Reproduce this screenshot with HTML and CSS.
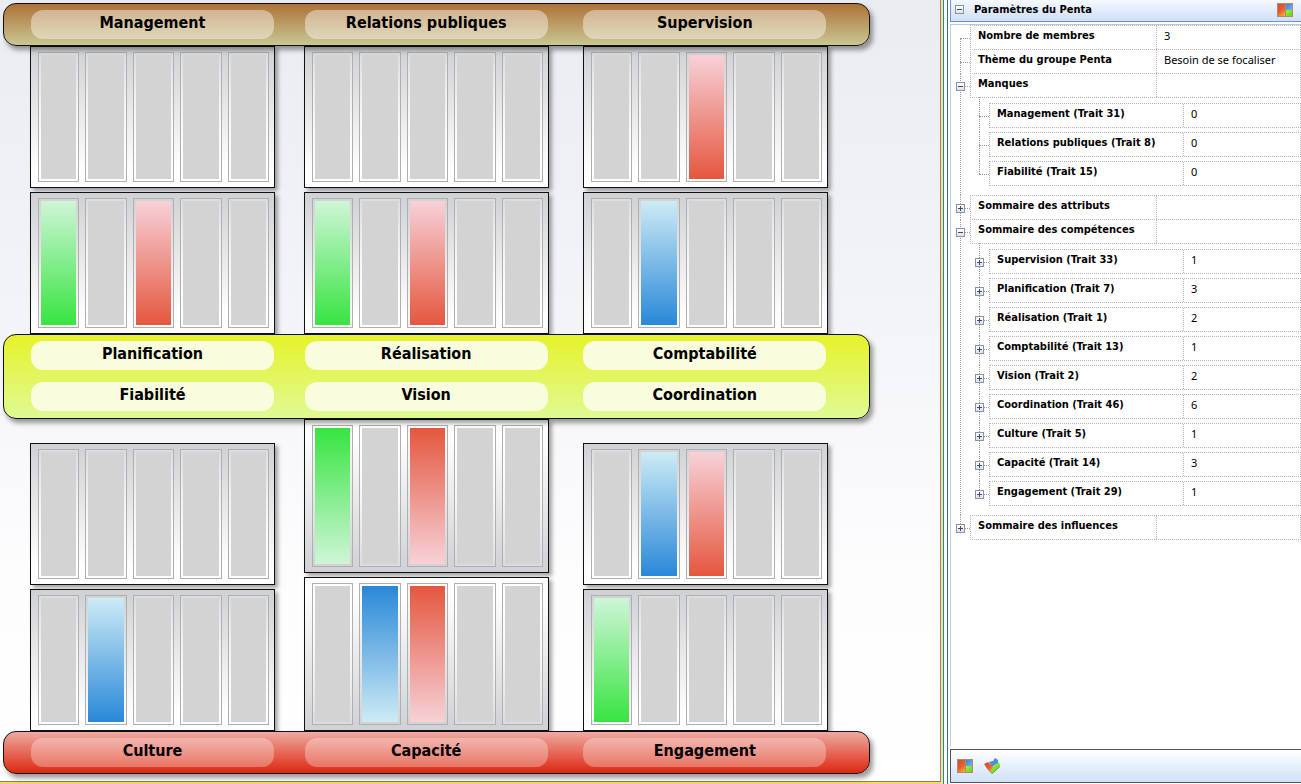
FILE: index.html
```html
<!DOCTYPE html>
<html lang="fr">

<head>
  <meta charset="UTF-8">
  <meta name="viewport" content="width=device-width, initial-scale=1.0">
  <title>Penta</title>
  <link rel="stylesheet" href="styles.css">
</head>

<body>
  <svg class="symbols" aria-hidden="true">
    <defs>
      <linearGradient id="red" x1="0" y1="0" x2="1" y2="1"><stop offset="0" stop-color="#c9502c"/><stop offset="1" stop-color="#f4603a"/></linearGradient>
      <linearGradient id="blue" x1="0" y1="0" x2="1" y2="1"><stop offset="0" stop-color="#3f7fd0"/><stop offset="1" stop-color="#6fb8f5"/></linearGradient>
      <linearGradient id="amber" x1="0" y1="0" x2="1" y2="1"><stop offset="0" stop-color="#e0401c"/><stop offset="1" stop-color="#ffb23c"/></linearGradient>
      <linearGradient id="green" x1="0" y1="0" x2="1" y2="1"><stop offset="0" stop-color="#a8f03c"/><stop offset="1" stop-color="#5cd414"/></linearGradient>
    </defs>
    <symbol id="tiles" viewBox="0 0 16 14">
      <rect width="16" height="14" fill="#b08a74"/>
      <rect x="1" y="1" width="7" height="6" fill="url(#red)"/>
      <rect x="9" y="1" width="6" height="6" fill="url(#blue)"/>
      <rect x="1" y="7" width="7" height="6" fill="url(#amber)"/>
      <rect x="9" y="7" width="6" height="6" fill="url(#green)"/>
    </symbol>
    <symbol id="tiles-tilted" viewBox="0 0 16 16">
      <path d="M0 6l4-2 4 4-4 4z" fill="url(#red)"/>
      <path d="M5 4l4-1 2-3 3 2v3l-6 4z" fill="#4f8fd8"/>
      <path d="M3 10l5-3 2 3-2 5z" fill="url(#amber)"/>
      <path d="M8 10l7-6 1 4-7 7-2-1z" fill="url(#green)"/>
      <path d="M4 11l4 4 8-7v1l-8 7-4-4z" fill="#5f9a3c"/>
    </symbol>
  </svg>

  <main class="chart">
    <div class="board">
      <div class="band brown">
        <h2 class="label">Management</h2>
        <h2 class="label">Relations publiques</h2>
        <h2 class="label">Supervision</h2>
      </div>

      <div class="columns">
        <div class="stack">
          <div class="panel"><i></i><i></i><i></i><i></i><i></i></div>
          <div class="panel"><i class="green"></i><i></i><i class="red"></i><i></i><i></i></div>
        </div>
        <div class="stack">
          <div class="panel"><i></i><i></i><i></i><i></i><i></i></div>
          <div class="panel"><i class="green"></i><i></i><i class="red"></i><i></i><i></i></div>
        </div>
        <div class="stack">
          <div class="panel"><i></i><i></i><i class="red"></i><i></i><i></i></div>
          <div class="panel"><i></i><i class="blue"></i><i></i><i></i><i></i></div>
        </div>
      </div>

      <div class="band yellow">
        <h2 class="label">Planification</h2>
        <h2 class="label">Réalisation</h2>
        <h2 class="label">Comptabilité</h2>
        <h2 class="label">Fiabilité</h2>
        <h2 class="label">Vision</h2>
        <h2 class="label">Coordination</h2>
      </div>

      <div class="columns">
        <div class="stack">
          <div class="panel"><i></i><i></i><i></i><i></i><i></i></div>
          <div class="panel"><i></i><i class="blue"></i><i></i><i></i><i></i></div>
        </div>
        <div class="stack flipped">
          <div class="panel"><i class="green"></i><i></i><i class="red"></i><i></i><i></i></div>
          <div class="panel"><i></i><i class="blue"></i><i class="red"></i><i></i><i></i></div>
        </div>
        <div class="stack">
          <div class="panel"><i></i><i class="blue"></i><i class="red"></i><i></i><i></i></div>
          <div class="panel"><i class="green"></i><i></i><i></i><i></i><i></i></div>
        </div>
      </div>

      <div class="band crimson">
        <h2 class="label">Culture</h2>
        <h2 class="label">Capacité</h2>
        <h2 class="label">Engagement</h2>
      </div>
    </div>
  </main>

  <div class="splitter"></div>

  <aside class="sidebar">
    <header class="sidebar-header">
      <button class="toggle open" aria-label="Réduire"></button>
      <h1>Paramètres du Penta</h1>
      <svg class="icon" width="16" height="14"><use href="#tiles"/></svg>
    </header>

    <div class="sidebar-body">
      <ul class="tree">
        <li><div class="row"><b>Nombre de membres</b><span>3</span></div></li>
        <li><div class="row"><b>Thème du groupe Penta</b><span>Besoin de se focaliser</span></div></li>
        <li>
          <button class="toggle open" aria-label="Réduire"></button>
          <div class="row"><b>Manques</b><span></span></div>
          <ul class="tree nested">
            <li><div class="row"><b>Management (Trait 31)</b><span>0</span></div></li>
            <li><div class="row"><b>Relations publiques (Trait 8)</b><span>0</span></div></li>
            <li><div class="row"><b>Fiabilité (Trait 15)</b><span>0</span></div></li>
          </ul>
        </li>
        <li><button class="toggle" aria-label="Développer"></button><div class="row"><b>Sommaire des attributs</b><span></span></div></li>
        <li>
          <button class="toggle open" aria-label="Réduire"></button>
          <div class="row"><b>Sommaire des compétences</b><span></span></div>
          <ul class="tree nested">
            <li><button class="toggle" aria-label="Développer"></button><div class="row"><b>Supervision (Trait 33)</b><span>1</span></div></li>
            <li><button class="toggle" aria-label="Développer"></button><div class="row"><b>Planification (Trait 7)</b><span>3</span></div></li>
            <li><button class="toggle" aria-label="Développer"></button><div class="row"><b>Réalisation (Trait 1)</b><span>2</span></div></li>
            <li><button class="toggle" aria-label="Développer"></button><div class="row"><b>Comptabilité (Trait 13)</b><span>1</span></div></li>
            <li><button class="toggle" aria-label="Développer"></button><div class="row"><b>Vision (Trait 2)</b><span>2</span></div></li>
            <li><button class="toggle" aria-label="Développer"></button><div class="row"><b>Coordination (Trait 46)</b><span>6</span></div></li>
            <li><button class="toggle" aria-label="Développer"></button><div class="row"><b>Culture (Trait 5)</b><span>1</span></div></li>
            <li><button class="toggle" aria-label="Développer"></button><div class="row"><b>Capacité (Trait 14)</b><span>3</span></div></li>
            <li><button class="toggle" aria-label="Développer"></button><div class="row"><b>Engagement (Trait 29)</b><span>1</span></div></li>
          </ul>
        </li>
        <li><button class="toggle" aria-label="Développer"></button><div class="row"><b>Sommaire des influences</b><span></span></div></li>
      </ul>
    </div>

    <footer class="sidebar-footer">
      <button class="tool" aria-label="Vue à plat"><svg width="16" height="14"><use href="#tiles"/></svg></button>
      <button class="tool" aria-label="Vue inclinée"><svg width="16" height="16"><use href="#tiles-tilted"/></svg></button>
    </footer>
  </aside>
</body>

</html>
```
FILE: styles.css
```css
* {
  box-sizing: border-box;
}

body {
  display: flex;
  height: 100vh;
  margin: 0;
  overflow: hidden;
  font-family: "Noto Sans", "DejaVu Sans", sans-serif;
  font-size: 11px;
  color: #000;
  background: #fff;
}

h1,
h2,
ul {
  margin: 0;
  padding: 0;
}

.symbols {
  position: absolute;
  width: 0;
  height: 0;
}

/* chart */
.chart {
  flex: 1;
  padding: 3px;
  border-right: 1px solid #a08a3c;
  border-bottom: 1px solid #8a8450;
  box-shadow: 0 2px #f6d468;
  margin-bottom: 2px;
  background: linear-gradient(#ebecf1, #f3f4f8 40%, #fdfdfe 75%, #fff);
}

.board {
  max-width: 867px;
}

.band,
.columns {
  display: grid;
  grid-template-columns: 274fr 279fr 245fr;
}

.band {
  position: relative;
  row-gap: 12px;
  padding: 6px 41px 6px 27px;
  border: 1px solid #111;
  border-radius: 13px;
  box-shadow: 3px 4px 5px rgba(0, 0, 0, 0.4);
}

.columns {
  align-items: end;
  padding: 0 42px 0 27px;
}

.brown {
  background: linear-gradient(#ad7338, #c9c793);
}

.yellow {
  padding-bottom: 7px;
  background: linear-gradient(#e6f22a, #dffa94);
}

.crimson {
  background: linear-gradient(#f0a9a2, #dc2810);
}

.label {
  max-width: 243px;
  height: 29px;
  border-radius: 12px;
  font-family: "DejaVu Sans Condensed", "DejaVu Sans", sans-serif;
  font-size: 16px;
  line-height: 26px;
  text-align: center;
  background: rgba(255, 255, 255, 0.42);
}

.yellow .label {
  background: #f9fddd;
}

.crimson .label {
  background: rgba(255, 255, 255, 0.3);
}

.stack {
  display: grid;
  gap: 4px;
  max-width: 245px;
}

.panel {
  display: flex;
  gap: 6px;
  height: 142px;
  padding: 5px 5px 5px 7px;
  border: 1px solid #111;
  background: linear-gradient(#d0d1d5, #fff 90%);
  box-shadow: 3px 3px 4px rgba(0, 0, 0, 0.35);
}

.panel i {
  flex: 1;
  padding: 2px;
  border: 1px solid #adafb2;
  background: linear-gradient(#d3d3d3, #d3d3d3) content-box, linear-gradient(rgba(255, 255, 255, 0.2), #fff);
}

.panel .green {
  background: linear-gradient(#cff5d8, #38e441) content-box, linear-gradient(#d3d3d3, #fff);
}

.panel .red {
  background: linear-gradient(#f7d1d8, #e4573f) content-box, linear-gradient(#d3d3d3, #fff);
}

.panel .blue {
  background: linear-gradient(#cdebf5, #2988d8) content-box, linear-gradient(#d3d3d3, #fff);
}

.flipped .panel {
  height: 154px;
  background: linear-gradient(#fff 10%, #d0d1d5);
}

.flipped i {
  background: linear-gradient(#d3d3d3, #d3d3d3) content-box, linear-gradient(#fff, rgba(255, 255, 255, 0.2));
}

.flipped .green {
  background: linear-gradient(#38e441, #cff5d8) content-box, linear-gradient(#fff, #d3d3d3);
}

.flipped .red {
  background: linear-gradient(#e4573f, #f7d1d8) content-box, linear-gradient(#fff, #d3d3d3);
}

.flipped .blue {
  background: linear-gradient(#2988d8, #cdebf5) content-box, linear-gradient(#fff, #d3d3d3);
}

/* splitter */
.splitter {
  width: 9px;
  border-right: 2px solid #fff;
  background: linear-gradient(90deg, #e6e3b4 2px, #3c7f86 2px 3px, #fff 3px 6px, #2b729c 6px);
}

/* sidebar */
.sidebar {
  display: flex;
  flex-direction: column;
  width: 351px;
}

.sidebar-header {
  display: flex;
  align-items: center;
  height: 22px;
  padding: 0 8px 2px 4px;
  border-left: 1px solid #6d92ca;
  border-bottom: 1px solid #6d92ca;
  background: linear-gradient(#f6f9ff, #cfdff6);
}

.sidebar-header h1 {
  flex: 1;
  margin-left: 10px;
}

.sidebar-header h1,
.row b {
  font-family: "DejaVu Sans Condensed", "DejaVu Sans", sans-serif;
  font-size: 11px;
}

.sidebar-body {
  flex: 1;
  margin: 2px 0;
  border-top: 1px solid #b8c8dc;
  border-left: 1px solid #c3d0e2;
}

.tree {
  padding-left: 19px;
  list-style: none;
}

.tree li {
  position: relative;
}

/* dotted connectors */
.tree li::before,
.tree li::after {
  content: "";
  position: absolute;
  left: -10px;
}

.tree li::before {
  top: 0;
  bottom: 0;
  border-left: 1px dotted #999;
}

.tree li::after {
  top: 13px;
  width: 10px;
  border-top: 1px dotted #999;
}

.tree > li:first-child::before {
  top: 13px;
}

.tree > li:last-child::before {
  bottom: auto;
  height: 13px;
}

.row {
  display: flex;
  height: 25px;
  margin-bottom: -1px;
  border: 1px dotted #b5b5b5;
  line-height: 20px;
}

.row b {
  width: 185px;
  padding-left: 7px;
}

.row span {
  flex: 1;
  padding-left: 7px;
  border-left: 1px dotted #b5b5b5;
}

.nested {
  padding-top: 6px;
  padding-bottom: 5px;
}

.nested li {
  padding-bottom: 5px;
}

.nested > li:first-child::before {
  top: -6px;
}

.nested > li:last-child::before {
  height: 13px;
}

.nested .row b {
  width: 193px;
}

.toggle {
  flex: none;
  width: 9px;
  height: 9px;
  padding: 0;
  border: 1px solid #8b93a5;
  background:
    linear-gradient(#3c4a7a, #3c4a7a) center / 5px 1px no-repeat,
    linear-gradient(#3c4a7a, #3c4a7a) center / 1px 5px no-repeat,
    linear-gradient(#fff, #dde2ec);
}

.toggle.open {
  background:
    linear-gradient(#3c4a7a, #3c4a7a) center / 5px 1px no-repeat,
    linear-gradient(#fff, #dde2ec);
}

.tree .toggle {
  position: absolute;
  z-index: 1;
  top: 9px;
  left: -14px;
}

.sidebar-footer {
  display: flex;
  align-items: center;
  gap: 11px;
  height: 34px;
  margin-bottom: 1px;
  padding-left: 6px;
  border: 1px solid #555;
  border-right: 0;
  background: linear-gradient(#fff, #cfe0f8);
}

.tool {
  display: flex;
  padding: 0;
  border: 0;
  background: none;
}
```
